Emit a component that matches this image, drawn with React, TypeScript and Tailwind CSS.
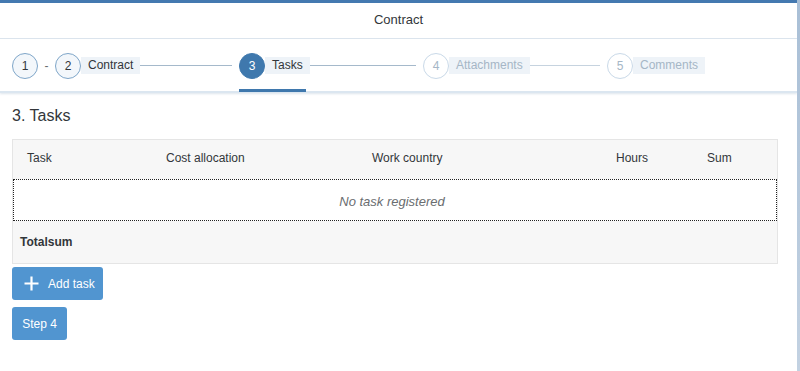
import * as React from "react";

const font = { fontFamily: '"Liberation Sans", Arial, sans-serif' };

type StepState = "done" | "active" | "future";

function Circle({ n, state }: { n: number; state: StepState }) {
  const cls =
    state === "active"
      ? "bg-[#3f78ad] border-[#3f78ad] text-white"
      : state === "done"
      ? "bg-[#f3f7fb] border-[#7fa6c9] text-[#32363a]"
      : "bg-white border-[#c9d9e8] text-[#a5b6c6]";
  return (
    <div
      className={`w-[26px] h-[26px] shrink-0 rounded-full border flex items-center justify-center text-[12px] ${cls}`}
    >
      {n}
    </div>
  );
}

function Step({
  n,
  label,
  state,
  line,
}: {
  n: number;
  label: string;
  state: StepState;
  line: boolean;
}) {
  const textCls = state === "future" ? "text-[#a5b6c6]" : "text-[#32363a]";
  const lineCls = state === "future" ? "bg-[#c6d3df]" : "bg-[#a5b9cb]";
  return (
    <div className="relative w-[184px] h-full flex items-center pr-[7px]">
      <Circle n={n} state={state} />
      <span className={`h-[17px] leading-[17px] bg-[#eef3f8] px-[7px] text-[12px] ${textCls}`}>
        {label}
      </span>
      {line && <div className={`flex-1 h-px ${lineCls}`} />}
      {state === "active" && (
        <div className="absolute left-0 -bottom-[1px] w-[67px] h-[3px] bg-[#3f78ad]" />
      )}
    </div>
  );
}

export default function App() {
  return (
    <div className="w-[800px] h-[371px] bg-white flex text-[#32363a]" style={font}>
      <div className="flex-1 flex flex-col">
        <div className="h-[3px] bg-[#4479b0]" />
        <div className="h-[36px] flex items-center justify-center border-b border-[#dde6ee] text-[13px] text-[#32363a] pb-[1px]">
          Contract
        </div>
        <div className="h-[54px] flex items-center border-b-2 border-[#dbe6f0] shadow-[0_1px_2px_rgba(120,150,180,0.25)] pl-[12px] pt-[1px]">
          <Circle n={1} state="done" />
          <span className="w-[17px] text-center text-[12px] text-[#6a6d70]">-</span>
          <Step n={2} label="Contract" state="done" line />
          <Step n={3} label="Tasks" state="active" line />
          <Step n={4} label="Attachments" state="future" line />
          <Step n={5} label="Comments" state="future" line={false} />
        </div>

        <div className="px-[12px]">
          <h2 className="text-[16px] mt-[13px] h-[20px] leading-[20px] text-[#32363a]">3. Tasks</h2>

          <div className="mt-[13px] w-[766px] border border-[#e5e5e5] text-[12px]">
            <div className="h-[39px] bg-[#f7f7f7] grid grid-cols-[139px_206px_244px_91px_1fr] items-center pl-[14px] pb-[3px]">
              <span>Task</span>
              <span>Cost allocation</span>
              <span>Work country</span>
              <span>Hours</span>
              <span>Sum</span>
            </div>
            <div className="h-[42px] bg-white border border-dotted border-[#222] flex items-center justify-center pt-[3px]">
              <span className="italic text-[13px] text-[#6a6d70] pr-[6px]">No task registered</span>
            </div>
            <div className="h-[42px] bg-[#f7f7f7] flex items-center pl-[7px] font-bold">
              Totalsum
            </div>
          </div>

          <div className="mt-[3px] flex flex-col gap-[7px] items-start">
            <button className="h-[33px] w-[91px] pl-[11px] rounded-[3px] bg-[#5195d0] text-white text-[12px] flex items-center gap-[8px]">
              <svg width="17" height="17" viewBox="0 0 17 17" fill="none">
                <path d="M8.5 1.5v14M1.5 8.5h14" stroke="white" strokeWidth="2.2" />
              </svg>
              Add task
            </button>
            <button className="h-[33px] w-[55px] rounded-[3px] bg-[#5195d0] text-white text-[12px]">
              Step 4
            </button>
          </div>
        </div>
      </div>
      <div className="w-[3px] bg-gradient-to-b from-[#a9bfd6] to-[#c3d2e2]" />
    </div>
  );
}
